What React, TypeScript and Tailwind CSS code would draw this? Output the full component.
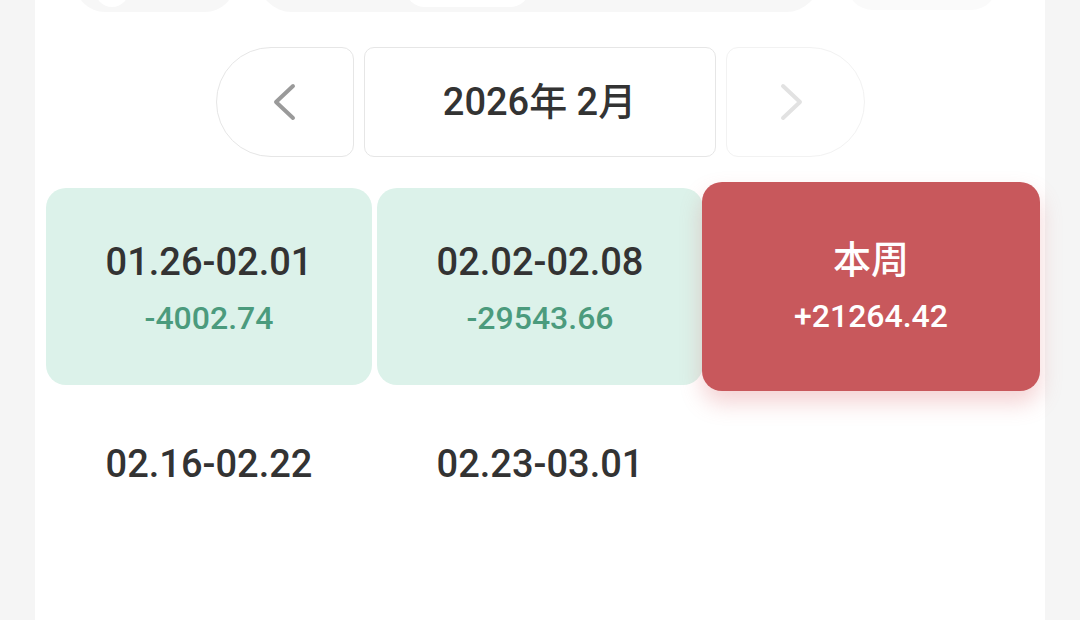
type Week = { label: string; amount?: string; current?: boolean };

const weeks: Week[] = [
  { label: "01.26-02.01", amount: "-4002.74" },
  { label: "02.02-02.08", amount: "-29543.66" },
  { label: "本周", amount: "+21264.42", current: true },
  { label: "02.16-02.22" },
  { label: "02.23-03.01" },
];

const font = { fontFamily: '"Roboto", "Noto Sans CJK SC", sans-serif' };

const Chevron = ({ dir, className }: { dir: "left" | "right"; className?: string }) => (
  <svg width="26" height="38" viewBox="0 0 26 38" fill="none" className={className}>
    <path
      d={dir === "left" ? "M22 3 L5 19 L22 35" : "M4 3 L21 19 L4 35"}
      stroke="currentColor"
      strokeWidth="4"
      strokeLinecap="round"
      strokeLinejoin="round"
    />
  </svg>
);

const WeekCard = ({ week }: { week: Week }) => {
  if (week.current) {
    return (
      <div className="h-[209px] -my-[6px] -mx-[6px] rounded-[20px] bg-[#c8585c] shadow-[0_12px_22px_rgba(214,96,100,0.28)] flex flex-col items-center pt-[55px]">
        <span className="text-[38px] leading-[46px] font-medium text-white">
          {week.label}
        </span>
        <span className="mt-[14px] text-[32px] leading-[38px] font-medium text-white">
          {week.amount}
        </span>
      </div>
    );
  }
  return (
    <div
      className={`h-[197px] rounded-[20px] flex flex-col items-center pt-[51px] ${
        week.amount ? "bg-[#dcf2ea]" : ""
      }`}
    >
      <span className="text-[38px] leading-[46px] font-medium text-[#333333]">
        {week.label}
      </span>
      {week.amount && (
        <span className="mt-[14px] text-[32px] leading-[38px] font-medium text-[#4b9b7d]">
          {week.amount}
        </span>
      )}
    </div>
  );
};

export default function App() {
  return (
    <div className="h-[620px] bg-[#f5f5f5] overflow-hidden" style={font}>
      <div className="mx-[35px] h-full bg-white">
        {/* cut-off tab row */}
        <div className="h-[12px] overflow-hidden relative">
          <div className="absolute bottom-0 left-[40px] w-[160px] h-[50px] rounded-b-[30px] bg-[#f7f7f7]">
            <div className="absolute bottom-[5px] left-[20px] w-[34px] h-[34px] rounded-full bg-white" />
          </div>
          <div className="absolute bottom-0 left-[223px] w-[562px] h-[50px] rounded-b-[34px] bg-[#f7f7f7]">
            <div className="absolute bottom-[5px] left-[147px] w-[125px] h-[40px] rounded-b-[20px] bg-white" />
          </div>
          <div className="absolute bottom-[2px] left-[812px] w-[150px] h-[50px] rounded-b-[26px] bg-[#fafafa]" />
        </div>

        {/* month switcher */}
        <div className="mt-[35px] flex justify-center gap-[10px]">
          <button className="w-[138px] h-[110px] rounded-l-[55px] rounded-r-[12px] border border-[#e6e6e6] flex items-center justify-center text-[#9a9a9a]">
            <Chevron dir="left" className="ml-[-2px]" />
          </button>
          <div className="w-[352px] h-[110px] rounded-[10px] border border-[#e6e6e6] flex items-center justify-center">
            <span className="text-[38px] font-medium text-[#333333]">2026年 2月</span>
          </div>
          <button className="w-[139px] h-[110px] rounded-r-[55px] rounded-l-[12px] border border-[#f2f2f2] flex items-center justify-center text-[#e2e2e2]">
            <Chevron dir="right" className="mr-[6px]" />
          </button>
        </div>

        {/* weeks */}
        <div className="mt-[31px] px-[11px] grid grid-cols-3 gap-[5px]">
          {weeks.map((w) => (
            <WeekCard key={w.label} week={w} />
          ))}
        </div>
      </div>
    </div>
  );
}
